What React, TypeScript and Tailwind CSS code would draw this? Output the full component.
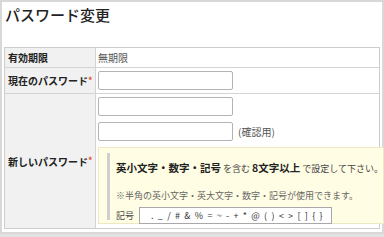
import React from "react";

export default function App() {
  return (
    <div className="w-[384px] h-[237px] bg-[#e2e2e2] font-['Noto_Sans_CJK_JP','Noto_Sans',sans-serif] text-[#222]">
      <div className="h-[234px] border-2 border-[#d8d8d8] bg-white px-[2px]">
        <div className="h-[45px] pl-[1px] pt-[3px] text-[15px] leading-[20px] font-medium">パスワード変更</div>
        <div className="border border-[#cdcdcd]">
          <div className="flex h-[20px] border-b border-[#d4d4d4]">
            <div className="w-[91px] shrink-0 bg-[#f1f1f1] border-r border-[#d4d4d4] flex items-center pl-[3px] text-[10px] font-bold">有効期限</div>
            <div className="flex items-center pl-[2px] text-[10px] text-[#555]">無期限</div>
          </div>
          <div className="flex h-[26px] border-b border-[#d4d4d4]">
            <div className="w-[91px] shrink-0 bg-[#f1f1f1] border-r border-[#d4d4d4] flex items-center pl-[3px] text-[10px] font-bold">
              現在のパスワード<span className="text-[#e0502a] text-[9px]">*</span>
            </div>
            <div className="flex items-center pl-[2px]">
              <div className="w-[135px] h-[19px] border border-[#b4b4b4] rounded-[2px] bg-white" />
            </div>
          </div>
          <div className="flex h-[134px]">
            <div className="w-[91px] shrink-0 bg-[#f1f1f1] border-r border-[#d4d4d4] flex items-center pl-[3px] text-[10px] font-bold">
              新しいパスワード<span className="text-[#e0502a] text-[9px]">*</span>
            </div>
            <div className="flex-1 flex flex-col pl-[2px] pr-[2px] pt-[3px] gap-[6px]">
              <div className="w-[135px] h-[19px] border border-[#b4b4b4] rounded-[2px] bg-white" />
              <div className="flex items-center gap-[5px]">
                <div className="w-[135px] h-[19px] border border-[#b4b4b4] rounded-[2px] bg-white" />
                <span className="text-[10px] text-[#555]">(確認用)</span>
              </div>
              <div className="h-[77px] bg-[#fffde3] border border-[#ece8c4] pt-[5px] pb-[3px] pl-[8px]">
                <div className="h-[67px] border-l-[3px] border-[#cfcfcf] pl-[6px] pt-[5px]">
                  <div className="leading-[14px] whitespace-nowrap">
                    <span className="text-[10.5px] font-bold">英小文字・数字・記号</span>
                    <span className="text-[9px] text-[#444]"> を含む </span>
                    <span className="text-[10.5px] font-bold">8文字以上</span>
                    <span className="text-[9px] text-[#444]"> で設定して下さい。</span>
                  </div>
                  <div className="mt-[13px] leading-[13px] text-[9px] text-[#666] whitespace-nowrap">※半角の英小文字・英大文字・数字・記号が使用できます。</div>
                  <div className="mt-[5px] flex items-center gap-[5px]">
                    <span className="text-[9px] text-[#444]">記号</span>
                    <div className="w-[193px] h-[17px] border border-[#a8a8a8] bg-white flex items-center pl-[11px] text-[9px] tracking-[1.15px] text-[#333] whitespace-pre">{". _ / # & % = ~ - + * @ ( ) < > [ ] { }"}</div>
                  </div>
                </div>
              </div>
            </div>
          </div>
        </div>
      </div>
    </div>
  );
}
